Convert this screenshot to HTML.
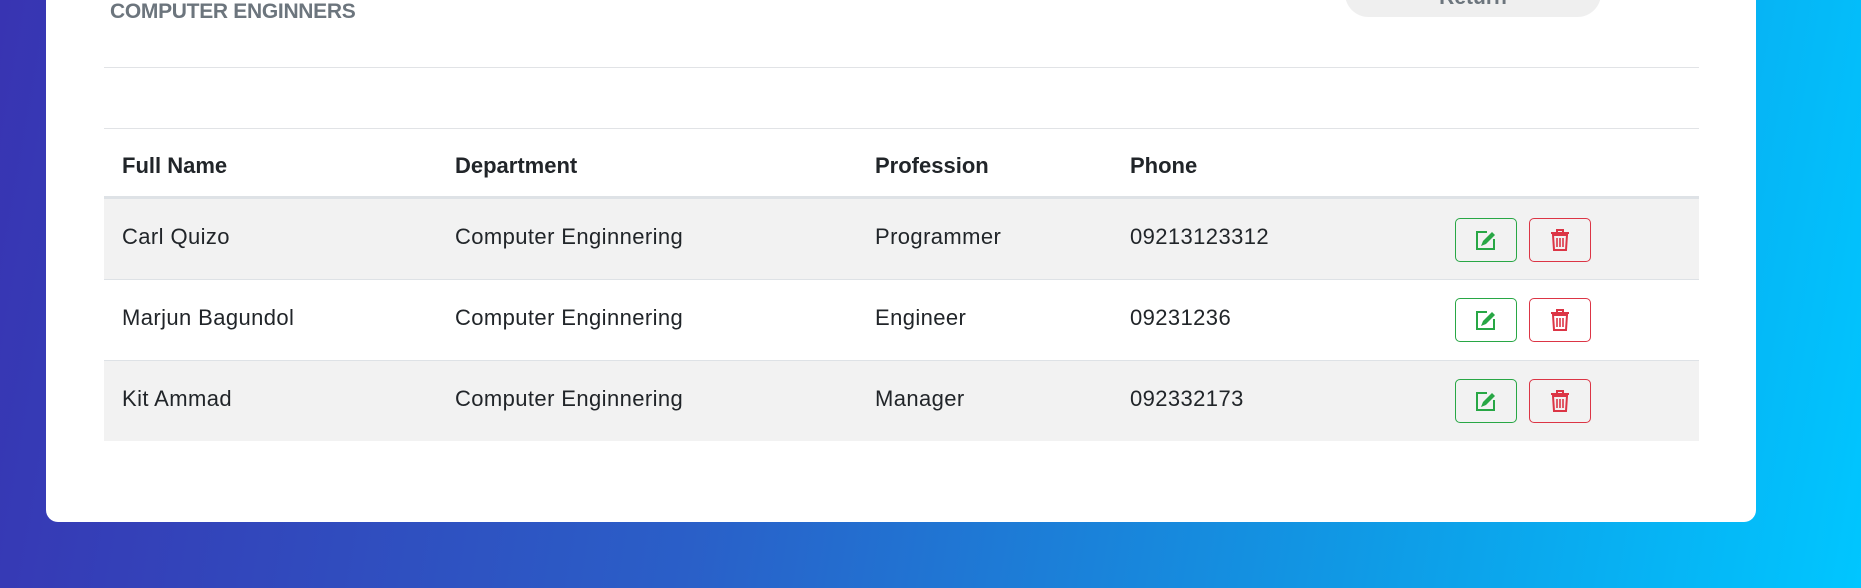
<!DOCTYPE html>
<html><head><meta charset="utf-8"><style>
*{margin:0;padding:0;box-sizing:border-box}
html,body{width:1861px;height:588px;overflow:hidden}
body{background:linear-gradient(100deg,#3834b2 0%,#2a5fc8 40%,#0f9be6 75%,#00c6ff 100%);font-family:"Liberation Sans",sans-serif;position:relative}
.card{position:absolute;left:46px;top:-40px;width:1710px;height:562px;background:#fff;border-radius:0 0 12px 12px}
.title{position:absolute;left:110px;top:0px;font-size:21px;font-weight:bold;color:#6c757d;letter-spacing:-0.3px}
.ret{position:absolute;left:1345px;top:-30px;width:256px;height:47px;background:#efefef;border-radius:24px}
.ret span{position:absolute;left:0;right:0;top:17px;text-align:center;font-weight:bold;color:#6c757d;font-size:21px;line-height:21px}
.hr{position:absolute;left:104px;width:1595px;height:1px;background:#e1e3e6}
.row{position:absolute;left:104px;width:1595px;font-size:22px;color:#212529;letter-spacing:0.4px}
.row span{position:absolute;top:50%;transform:translateY(-50%);white-space:nowrap}
.head span{font-weight:bold;letter-spacing:0}
.c1{left:18px}.c2{left:351px}.c3{left:771px}.c4{left:1026px}
.btn{position:absolute;width:62px;height:44px;border:1px solid;border-radius:5px;display:flex;align-items:center;justify-content:center}
.e{left:1351px;border-color:#28a745}.d{left:1425px;border-color:#dc3545}
</style></head><body>
<div class="card"></div>
<div class="ret"><span>Return</span></div>
<div class="title">COMPUTER ENGINNERS</div>
<div class="hr" style="top:67px"></div>
<div class="hr" style="top:128px"></div>
<div class="row head" style="top:132px;height:67px"><span class="c1">Full Name</span><span class="c2">Department</span><span class="c3">Profession</span><span class="c4">Phone</span></div>
<div class="hr" style="top:196px;height:3px;background:#dee2e6"></div>

<div class="row" style="top:199px;height:81px;background:#f2f2f2;border-bottom:1px solid #dee2e6"><span class="c1" style="margin-top:-2px">Carl Quizo</span><span class="c2" style="margin-top:-2px">Computer Enginnering</span><span class="c3" style="margin-top:-2px">Programmer</span><span class="c4" style="margin-top:-2px">09213123312</span>
<div class="btn e" style="top:19px"><svg width="22" height="22" viewBox="0 0 22 22"><path d="M12 3H2v17h17V10" fill="none" stroke="#28a745" stroke-width="2"/><path d="M6 17l2-5 9-9 3 3-9 9z" fill="#28a745"/></svg></div>
<div class="btn d" style="top:19px"><svg width="22" height="24" viewBox="0 0 22 24"><path d="M2 5h18M8 5V2h6v3M4 7h14l-1 15H5z" fill="none" stroke="#dc3545" stroke-width="2"/><path d="M8 10v9M11 10v9M14 10v9" stroke="#dc3545" stroke-width="1.6"/></svg></div></div>

<div class="row" style="top:280px;height:81px;background:#fff;border-bottom:1px solid #dee2e6"><span class="c1" style="margin-top:-2px">Marjun Bagundol</span><span class="c2" style="margin-top:-2px">Computer Enginnering</span><span class="c3" style="margin-top:-2px">Engineer</span><span class="c4" style="margin-top:-2px">09231236</span>
<div class="btn e" style="top:18px"><svg width="22" height="22" viewBox="0 0 22 22"><path d="M12 3H2v17h17V10" fill="none" stroke="#28a745" stroke-width="2"/><path d="M6 17l2-5 9-9 3 3-9 9z" fill="#28a745"/></svg></div>
<div class="btn d" style="top:18px"><svg width="22" height="24" viewBox="0 0 22 24"><path d="M2 5h18M8 5V2h6v3M4 7h14l-1 15H5z" fill="none" stroke="#dc3545" stroke-width="2"/><path d="M8 10v9M11 10v9M14 10v9" stroke="#dc3545" stroke-width="1.6"/></svg></div></div>

<div class="row" style="top:361px;height:80px;background:#f2f2f2"><span class="c1" style="margin-top:-2px">Kit Ammad</span><span class="c2" style="margin-top:-2px">Computer Enginnering</span><span class="c3" style="margin-top:-2px">Manager</span><span class="c4" style="margin-top:-2px">092332173</span>
<div class="btn e" style="top:18px"><svg width="22" height="22" viewBox="0 0 22 22"><path d="M12 3H2v17h17V10" fill="none" stroke="#28a745" stroke-width="2"/><path d="M6 17l2-5 9-9 3 3-9 9z" fill="#28a745"/></svg></div>
<div class="btn d" style="top:18px"><svg width="22" height="24" viewBox="0 0 22 24"><path d="M2 5h18M8 5V2h6v3M4 7h14l-1 15H5z" fill="none" stroke="#dc3545" stroke-width="2"/><path d="M8 10v9M11 10v9M14 10v9" stroke="#dc3545" stroke-width="1.6"/></svg></div></div>
</body></html>
